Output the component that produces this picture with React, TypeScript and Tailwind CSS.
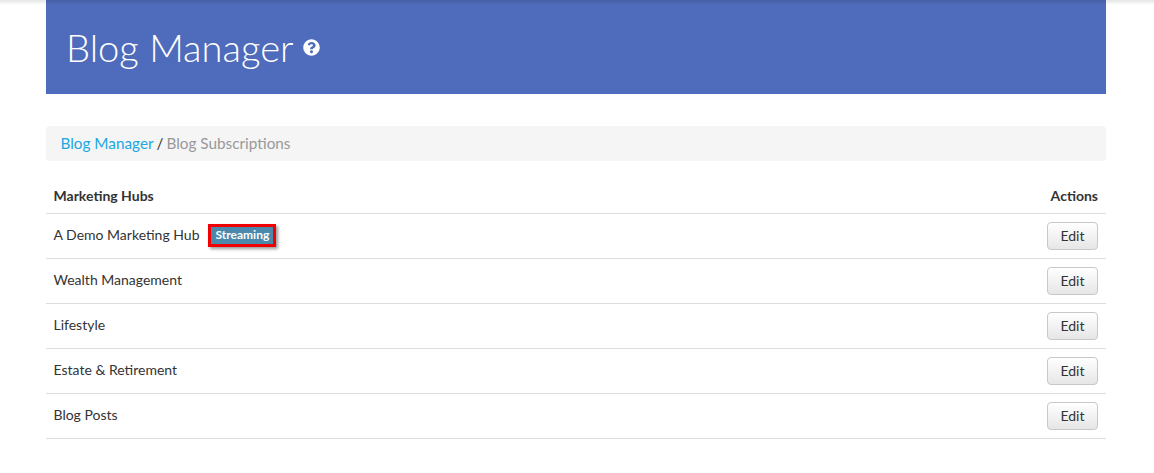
import { FaQuestionCircle } from 'react-icons/fa';

const hubs = ['A Demo Marketing Hub', 'Wealth Management', 'Lifestyle', 'Estate & Retirement', 'Blog Posts'];

function HubRow({ name, streaming }: { name: string; streaming: boolean }) {
  return (
    <div className="flex h-[45px] items-center justify-between border-b border-[#dddddd] pr-2 pl-[7.5px]">
      <div className="flex items-center">
        <span className="pb-[4px]">{name}</span>
        {streaming && (
          <span className="mb-[1px] ml-[9px] border-[3px] border-[#f00000] bg-[#4a89ac] px-[4px] pb-[1px] text-[12px] leading-[16px] font-bold text-white shadow-[2px_2px_3px_rgba(0,0,0,0.4)]">
            Streaming
          </span>
        )}
      </div>
      <button className="h-[28px] w-[51px] rounded-[4px] border border-[#c8c8c8] bg-gradient-to-b from-white to-[#e6e6e6] pb-[2px] text-[14px] text-[#333333]">
        Edit
      </button>
    </div>
  );
}

export default function App() {
  return (
    <div className="relative min-h-[473px] bg-white font-['Lato',sans-serif] text-[14px] text-[#333333]">
      <div className="absolute inset-x-0 top-0 h-[5px] bg-gradient-to-b from-[rgba(0,0,0,0.1)] to-transparent" />
      <div className="mx-[46px] w-[1060px]">
        <header className="flex h-[94px] items-center bg-[#4f6bbb] pl-[20px] text-white">
          <h1 className="text-[38.15px] leading-[46px] font-light">Blog Manager</h1>
          <FaQuestionCircle className="ml-[9px] text-[17px]" />
        </header>
        <nav className="mt-[32px] flex h-[35px] items-center rounded-[4px] bg-[#f5f5f5] pl-[14.5px] text-[15.3px]">
          <a className="text-[#1ea7e1]">Blog Manager</a>
          <span className="mx-[3px]">/</span>
          <span className="text-[#999999]">Blog Subscriptions</span>
        </nav>
        <div className="mt-[18px]">
          <div className="flex h-[35px] items-center justify-between border-b border-[#dddddd] pr-2 pb-[2px] pl-[7.5px] font-bold">
            <span>Marketing Hubs</span>
            <span>Actions</span>
          </div>
          {hubs.map((name, i) => (
            <HubRow key={name} name={name} streaming={i === 0} />
          ))}
        </div>
      </div>
    </div>
  );
}
